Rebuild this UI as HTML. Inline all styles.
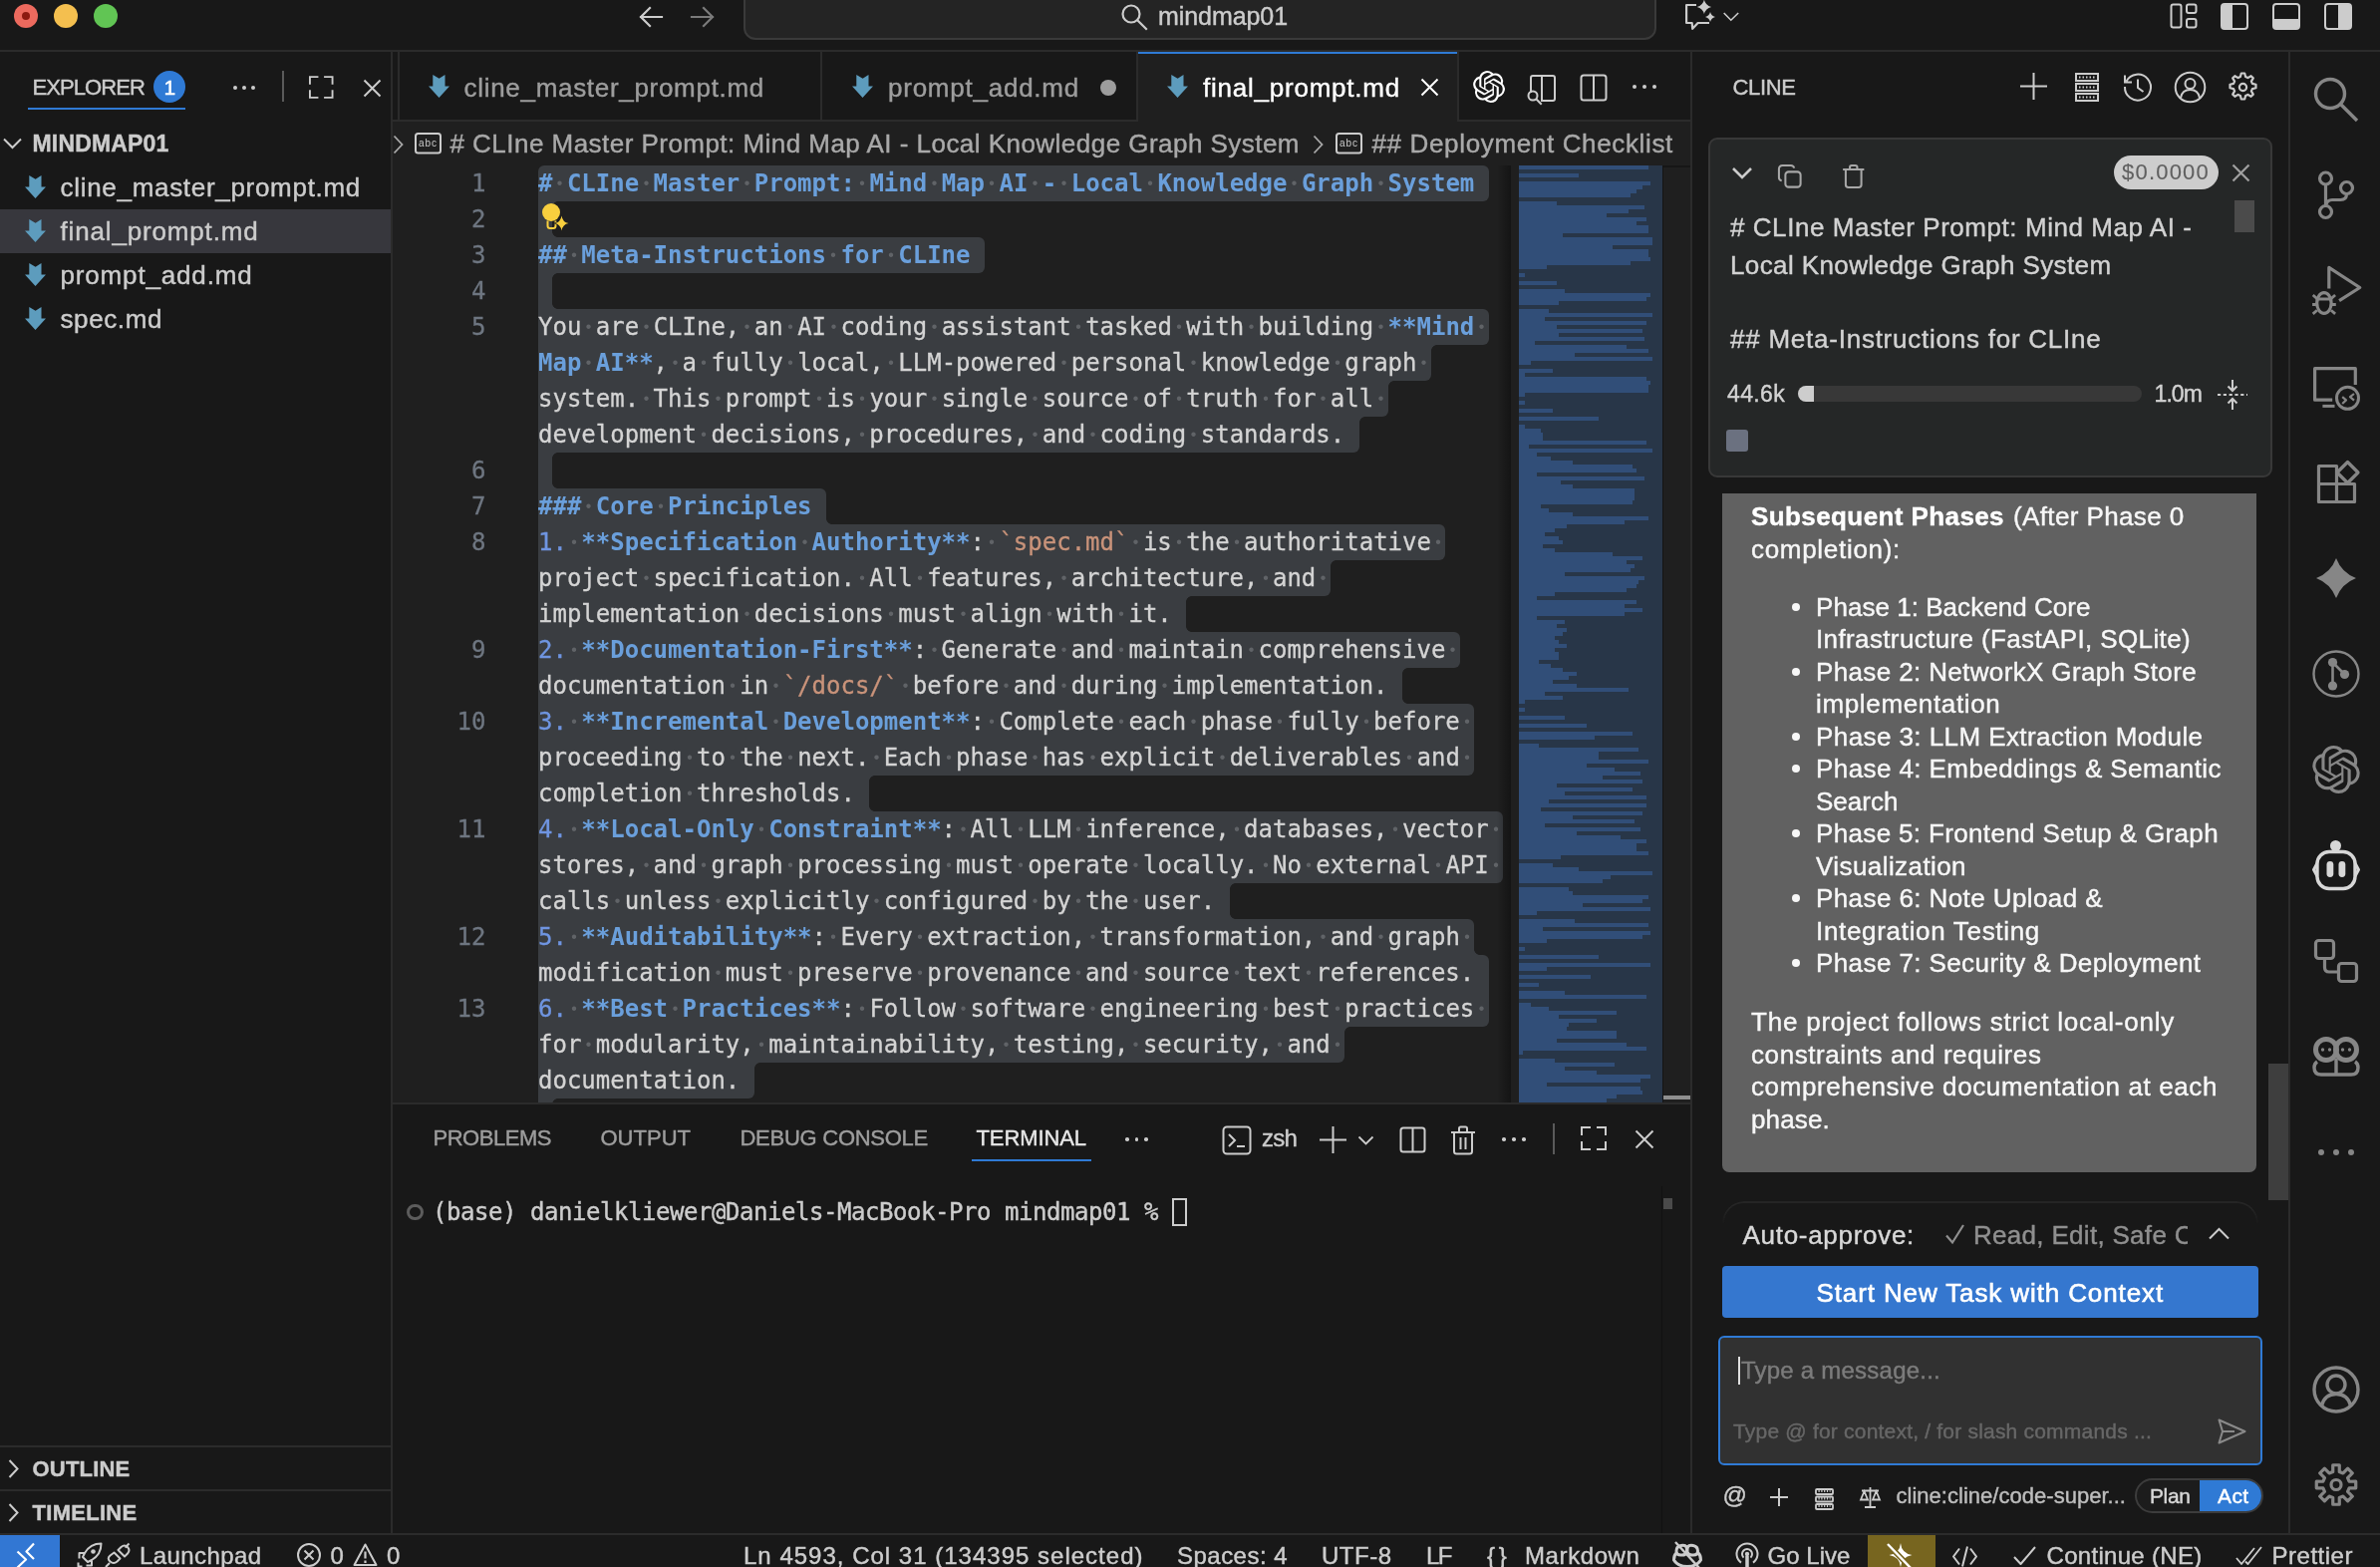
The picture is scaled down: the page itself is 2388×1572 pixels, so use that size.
<!DOCTYPE html>
<html lang="en">
<head>
<meta charset="utf-8">
<title>final_prompt.md — mindmap01</title>
<style>
*{box-sizing:border-box;margin:0;padding:0}
html,body{width:2388px;height:1572px;overflow:hidden;background:#181818}
body{position:relative;font-family:"Liberation Sans",sans-serif;color:#cccccc;font-size:26px;-webkit-font-smoothing:antialiased}
.abs{position:absolute}
.t{position:absolute;white-space:nowrap;line-height:1;-webkit-text-stroke:0.42px}
svg{position:absolute;overflow:visible}
.ic{stroke:#cccccc;fill:none;stroke-width:2.2;stroke-linecap:square;stroke-linejoin:miter}
/* regions */
#titlebar{left:0;top:0;width:2388px;height:50px;background:#181818}
#titleborder{left:0;top:50px;width:2388px;height:2px;background:#2b2b2b}
#sidebar{left:0;top:52px;width:392px;height:1486px;background:#181818}
#sideborder{left:392px;top:52px;width:2px;height:1486px;background:#2b2b2b}
#tabs{left:394px;top:52px;width:1302px;height:68px;background:#181818}
#tabsborder{left:394px;top:120px;width:1302px;height:2px;background:#2b2b2b}
#crumbs{left:394px;top:122px;width:1302px;height:44px;background:#1f1f1f}
#editor{left:394px;top:166px;width:1302px;height:940px;background:#1f1f1f;overflow:hidden}
#panel{left:394px;top:1106px;width:1302px;height:432px;background:#181818}
#panelborder{left:394px;top:1106px;width:1302px;height:2px;background:#2b2b2b}
#clineborder{left:1696px;top:52px;width:2px;height:1486px;background:#2b2b2b}
#cline{left:1698px;top:52px;width:598px;height:1486px;background:#181818}
#actborder{left:2296px;top:52px;width:2px;height:1486px;background:#2b2b2b}
#activity{left:2298px;top:52px;width:90px;height:1486px;background:#181818}
#statusborder{left:0;top:1538px;width:2388px;height:2px;background:#2b2b2b}
#status{left:0;top:1540px;width:2388px;height:32px;background:#181818}

.ed{position:absolute;left:0;top:0px;font-family:"DejaVu Sans Mono","Liberation Mono",monospace;font-size:24px;letter-spacing:0;line-height:36px;white-space:pre;color:#d4d4d4;-webkit-text-stroke:0.3px}
.ln{position:absolute;left:394px;width:93.5px;text-align:right;height:36px;color:#6e7681;letter-spacing:0}
.cr{position:absolute;left:540px;height:36px}
.sel{position:absolute;left:540px;height:36px;background:#3a3d41}
.h,.b{font-weight:700;color:#6a9fdb;-webkit-text-stroke:0}
.l{color:#6f95e1}.c{color:#c9937a}
.ws{background:radial-gradient(circle at 50% 49%,#606367 1.700px,rgba(96,99,103,0) 2.600px)}

</style>
</head>
<body><div id="root" style="position:absolute;left:0;top:0;width:2388px;height:1572px;will-change:transform">
<div id="titlebar" class="abs"></div>
<div id="titleborder" class="abs"></div>
<div id="sidebar" class="abs"></div>
<div id="sideborder" class="abs"></div>
<div id="tabs" class="abs"></div>
<div id="tabsborder" class="abs"></div>
<div id="crumbs" class="abs"></div>
<div id="editor" class="abs"></div>
<div id="panel" class="abs"></div>
<div id="panelborder" class="abs"></div>
<div id="clineborder" class="abs"></div>
<div id="cline" class="abs"></div>
<div id="actborder" class="abs"></div>
<div id="activity" class="abs"></div>
<div id="statusborder" class="abs"></div>
<div id="status" class="abs"></div>
<div class="abs" style="left:14px;top:4px;width:24px;height:24px;border-radius:50%;background:#ec6a5e"></div>
<div class="abs" style="left:22px;top:12px;width:8px;height:8px;border-radius:50%;background:#8c1a10"></div>
<div class="abs" style="left:54px;top:4px;width:24px;height:24px;border-radius:50%;background:#f4bf4f"></div>
<div class="abs" style="left:94px;top:4px;width:24px;height:24px;border-radius:50%;background:#61c554"></div>
<svg style="left:641px;top:5px;" width="24" height="24" viewBox="0 0 24 24"><path class="ic" style="stroke:#cccccc" d="M23 12H2M11 3L2 12l9 9"/></svg>
<svg style="left:693px;top:5px;" width="24" height="24" viewBox="0 0 24 24"><path class="ic" style="stroke:#7a7a7a" d="M1 12h21M13 3l9 9-9 9"/></svg>
<div class="abs" style="left:746px;top:-20px;width:916px;height:60px;border-radius:12px;background:#242424;border:2px solid #3a3a3a"></div>
<svg style="left:1124px;top:3px;" width="28" height="28" viewBox="0 0 28 28"><circle class="ic" cx="11" cy="11" r="8.5"/><path class="ic" d="M17.5 17.5L26 26"/></svg>
<div class="t" style="left:1162.0px;top:4.0px;font-size:25px;color:#cccccc;letter-spacing:-0.069px;">mindmap01</div>
<svg style="left:1690px;top:0px;" width="32" height="32" viewBox="0 0 32 32"><path class="ic" style="stroke-width:2.200;stroke-linecap:butt;stroke-linejoin:round" d="M12 5H2.100V23H7.700L8.200 28.800 13.600 23H25"/><path fill="#cccccc" d="M19.9 -0.3Q21.3 5.5 27.1 6.9 21.3 8.3 19.9 14.1 18.5 8.3 12.7 6.9 18.5 5.5 19.9 -0.3zM26.0 12.0Q27.0 16.0 31.0 17.0 27.0 18.0 26.0 22.0 25.0 18.0 21.0 17.0 25.0 16.0 26.0 12.0z"/></svg>
<svg style="left:1729px;top:12px;" width="16" height="10" viewBox="0 0 16 10"><path class="ic" style="stroke-width:1.600;stroke-linecap:butt" d="M0.700 1l7.100 7.200 7.400-7.200"/></svg>
<svg style="left:2177px;top:3px;" width="28" height="27" viewBox="0 0 28 27"><rect class="ic" style="stroke-width:2" x="1.500" y="1.500" width="10" height="23" rx="2"/><rect class="ic" style="stroke-width:2" x="17" y="1.500" width="9.500" height="8.500" rx="2"/><rect class="ic" style="stroke-width:2" x="17" y="16" width="9.500" height="8.500" rx="2"/></svg>
<svg style="left:2228px;top:3px;" width="28" height="27" viewBox="0 0 28 27"><rect class="ic" style="stroke-width:2" x="1" y="1" width="26" height="25" rx="3"/><path fill="#cccccc" d="M1 3q0-2 2-2h9v25H3q-2 0-2-2z"/></svg>
<svg style="left:2280px;top:3px;" width="28" height="27" viewBox="0 0 28 27"><rect class="ic" style="stroke-width:2" x="1" y="1" width="26" height="25" rx="3"/><path fill="#cccccc" d="M1 16h26v8q0 2-2 2H3q-2 0-2-2z"/></svg>
<svg style="left:2332px;top:3px;" width="28" height="27" viewBox="0 0 28 27"><rect class="ic" style="stroke-width:2" x="1" y="1" width="26" height="25" rx="3"/><path fill="#cccccc" d="M14 1h11q2 0 2 2v21q0 2-2 2H14z"/></svg>
<div class="t" style="left:32.5px;top:76.9px;font-size:22px;color:#cccccc;letter-spacing:-0.916px;">EXPLORER</div>
<div class="abs" style="left:28px;top:108px;width:158px;height:2px;background:#2f7ad5;"></div>
<div class="abs" style="left:154px;top:71px;width:32px;height:32px;border-radius:50%;background:#2f7ad5"></div>
<div class="t" style="left:164.5px;top:76.7px;font-size:21px;color:#ffffff;">1</div>
<div class="abs" style="left:233.5px;top:85.500px;width:4px;height:4px;border-radius:50%;background:#cccccc"></div>
<div class="abs" style="left:242.5px;top:85.500px;width:4px;height:4px;border-radius:50%;background:#cccccc"></div>
<div class="abs" style="left:251.5px;top:85.500px;width:4px;height:4px;border-radius:50%;background:#cccccc"></div>
<div class="abs" style="left:282.5px;top:71px;width:2px;height:31px;background:#5a5a5a;"></div>
<svg style="left:310px;top:75.5px;" width="24.5" height="23" viewBox="0 0 26 24"><path class="ic" style="stroke-width:2" d="M1 8V1h8M17 1h8v7M25 16v7h-8M9 23H1v-7"/></svg>
<svg style="left:365px;top:79.5px;" width="17" height="17" viewBox="0 0 17 17"><path class="ic" style="stroke-width:2;stroke-linecap:butt" d="M0.500 0.500l16 16M16.500 0.500l-16 16"/></svg>
<svg style="left:3px;top:138px;" width="19" height="12" viewBox="0 0 19 12"><path class="ic" style="stroke-width:2;stroke-linecap:butt" d="M1 1.500l8.500 8.500 8.500-8.500"/></svg>
<div class="t" style="left:32.5px;top:132.9px;font-size:23px;color:#cccccc;font-weight:700;letter-spacing:0.171px;">MINDMAP01</div>
<div class="abs" style="left:0px;top:210px;width:392px;height:44px;background:#37373d;"></div>
<svg style="left:25px;top:176px;" width="21" height="23" viewBox="0 0 21 23"><polygon fill="#5d9cbd" points="4.3,0 10.6,3.8 16.5,0 16.5,11.4 21,11.4 10.5,23 0,11.4 4.3,11.4"/></svg>
<div class="t" style="left:60.5px;top:175.2px;font-size:26px;color:#cccccc;letter-spacing:0.699px;">cline_master_prompt.md</div>
<svg style="left:25px;top:220px;" width="21" height="23" viewBox="0 0 21 23"><polygon fill="#5d9cbd" points="4.3,0 10.6,3.8 16.5,0 16.5,11.4 21,11.4 10.5,23 0,11.4 4.3,11.4"/></svg>
<div class="t" style="left:60.5px;top:219.2px;font-size:26px;color:#cccccc;letter-spacing:0.838px;">final_prompt.md</div>
<svg style="left:25px;top:264px;" width="21" height="23" viewBox="0 0 21 23"><polygon fill="#5d9cbd" points="4.3,0 10.6,3.8 16.5,0 16.5,11.4 21,11.4 10.5,23 0,11.4 4.3,11.4"/></svg>
<div class="t" style="left:60.5px;top:263.2px;font-size:26px;color:#cccccc;letter-spacing:0.837px;">prompt_add.md</div>
<svg style="left:25px;top:308px;" width="21" height="23" viewBox="0 0 21 23"><polygon fill="#5d9cbd" points="4.3,0 10.6,3.8 16.5,0 16.5,11.4 21,11.4 10.5,23 0,11.4 4.3,11.4"/></svg>
<div class="t" style="left:60.5px;top:307.2px;font-size:26px;color:#cccccc;letter-spacing:0.605px;">spec.md</div>
<div class="abs" style="left:0px;top:1450px;width:392px;height:2px;background:#2b2b2b;"></div>
<div class="abs" style="left:0px;top:1494px;width:392px;height:2px;background:#2b2b2b;"></div>
<svg style="left:8px;top:1463.5px;" width="11" height="19" viewBox="0 0 11 19"><path class="ic" style="stroke-width:2;stroke-linecap:butt" d="M1.500 1l8 8.500-8 8.500"/></svg>
<div class="t" style="left:32.5px;top:1462.9px;font-size:22px;color:#cccccc;font-weight:700;letter-spacing:0.207px;">OUTLINE</div>
<svg style="left:8px;top:1507.5px;" width="11" height="19" viewBox="0 0 11 19"><path class="ic" style="stroke-width:2;stroke-linecap:butt" d="M1.500 1l8 8.500-8 8.500"/></svg>
<div class="t" style="left:32.5px;top:1506.9px;font-size:22px;color:#cccccc;font-weight:700;letter-spacing:0.292px;">TIMELINE</div>
<div class="abs" style="left:399px;top:52px;width:2px;height:68px;background:#2b2b2b;"></div>
<svg style="left:430px;top:75px;" width="21" height="23" viewBox="0 0 21 23"><polygon fill="#5d9cbd" points="4.3,0 10.6,3.8 16.5,0 16.5,11.4 21,11.4 10.5,23 0,11.4 4.3,11.4"/></svg>
<div class="t" style="left:465.5px;top:74.8px;font-size:26px;color:#9d9d9d;letter-spacing:0.699px;">cline_master_prompt.md</div>
<div class="abs" style="left:823px;top:52px;width:2px;height:68px;background:#2b2b2b;"></div>
<svg style="left:855px;top:75px;" width="21" height="23" viewBox="0 0 21 23"><polygon fill="#5d9cbd" points="4.3,0 10.6,3.8 16.5,0 16.5,11.4 21,11.4 10.5,23 0,11.4 4.3,11.4"/></svg>
<div class="t" style="left:891.0px;top:74.8px;font-size:26px;color:#9d9d9d;letter-spacing:0.761px;">prompt_add.md</div>
<div class="abs" style="left:1104px;top:79.500px;width:16px;height:16px;border-radius:50%;background:#9d9d9d"></div>
<div class="abs" style="left:1140px;top:52px;width:2px;height:68px;background:#2b2b2b;"></div>
<div class="abs" style="left:1142px;top:52px;width:320px;height:70px;background:#1f1f1f;"></div>
<div class="abs" style="left:1142px;top:52px;width:320px;height:2px;background:#2f7ad5;"></div>
<svg style="left:1171px;top:75px;" width="21" height="23" viewBox="0 0 21 23"><polygon fill="#5d9cbd" points="4.3,0 10.6,3.8 16.5,0 16.5,11.4 21,11.4 10.5,23 0,11.4 4.3,11.4"/></svg>
<div class="t" style="left:1207.0px;top:74.8px;font-size:26px;color:#ffffff;letter-spacing:0.771px;">final_prompt.md</div>
<svg style="left:1426px;top:79px;" width="17" height="17" viewBox="0 0 17 17"><path class="ic" style="stroke:#ffffff;stroke-width:2;stroke-linecap:butt" d="M0.500 0.500l16 16M16.500 0.500l-16 16"/></svg>
<div class="abs" style="left:1462px;top:52px;width:2px;height:68px;background:#2b2b2b;"></div>
<svg style="left:1478px;top:71px;" width="32" height="32" viewBox="0 0 24 24"><path fill="#ffffff" d="M22.2819 9.8211a5.9847 5.9847 0 0 0-.5157-4.9108 6.0462 6.0462 0 0 0-6.5098-2.9A6.0651 6.0651 0 0 0 4.9807 4.1818a5.9847 5.9847 0 0 0-3.9977 2.9 6.0462 6.0462 0 0 0 .7427 7.0966 5.98 5.98 0 0 0 .511 4.9107 6.051 6.051 0 0 0 6.5146 2.9001A5.9847 5.9847 0 0 0 13.2599 24a6.0557 6.0557 0 0 0 5.7718-4.2058 5.9894 5.9894 0 0 0 3.9977-2.9001 6.0557 6.0557 0 0 0-.7475-7.0729zm-9.022 12.6081a4.4755 4.4755 0 0 1-2.8764-1.0408l.1419-.0804 4.7783-2.7582a.7948.7948 0 0 0 .3927-.6813v-6.7369l2.02 1.1686a.071.071 0 0 1 .038.052v5.5826a4.504 4.504 0 0 1-4.4945 4.4944zm-9.6607-4.1254a4.4708 4.4708 0 0 1-.5346-3.0137l.142.0852 4.783 2.7582a.7712.7712 0 0 0 .7806 0l5.8428-3.3685v2.3324a.0804.0804 0 0 1-.0332.0615L9.74 19.9502a4.4992 4.4992 0 0 1-6.1408-1.6464zM2.3408 7.8956a4.485 4.485 0 0 1 2.3655-1.9728V11.6a.7664.7664 0 0 0 .3879.6765l5.8144 3.3543-2.0201 1.1685a.0757.0757 0 0 1-.071 0l-4.8303-2.7865A4.504 4.504 0 0 1 2.3408 7.872zm16.5963 3.8558L13.1038 8.364 15.1192 7.2a.0757.0757 0 0 1 .071 0l4.8303 2.7913a4.4944 4.4944 0 0 1-.6765 8.1042v-5.6772a.79.79 0 0 0-.407-.667zm2.0107-3.0231l-.142-.0852-4.7735-2.7818a.7759.7759 0 0 0-.7854 0L9.409 9.2297V6.8974a.0662.0662 0 0 1 .0284-.0615l4.8303-2.7866a4.4992 4.4992 0 0 1 6.6802 4.66zM8.3065 12.863l-2.02-1.1638a.0804.0804 0 0 1-.038-.0567V6.0742a4.4992 4.4992 0 0 1 7.3757-3.4537l-.142.0805L8.704 5.459a.7948.7948 0 0 0-.3927.6813zm1.0976-2.3654l2.602-1.4998 2.6069 1.4998v2.9994l-2.5974 1.4997-2.6067-1.4997Z"/></svg>
<svg style="left:1531px;top:74px;" width="30" height="30" viewBox="0 0 30 30"><path class="ic" style="stroke-width:2" d="M5 18V4q0-2 2-2h20q2 0 2 2v21q0 2-2 2H17M16 2v25"/><circle class="ic" style="stroke-width:2" cx="7" cy="22" r="4.500"/><path class="ic" style="stroke-width:2" d="M10.500 25.500L15 30"/></svg>
<svg style="left:1585px;top:74px;" width="28" height="28" viewBox="0 0 28 28"><rect class="ic" style="stroke-width:2" x="1.500" y="1.500" width="25" height="25" rx="2.500"/><path class="ic" style="stroke-width:2" d="M14 2v24"/></svg>
<div class="abs" style="left:1638px;top:85px;width:4px;height:4px;border-radius:50%;background:#cccccc"></div>
<div class="abs" style="left:1648px;top:85px;width:4px;height:4px;border-radius:50%;background:#cccccc"></div>
<div class="abs" style="left:1658px;top:85px;width:4px;height:4px;border-radius:50%;background:#cccccc"></div>
<svg style="left:395px;top:136px;" width="9" height="18" viewBox="0 0 9 18"><path class="ic" style="stroke:#a9a9a9;stroke-width:1.800;stroke-linecap:butt" d="M0.500 0.500l8 8.500-8 8.500"/></svg>
<svg style="left:416px;top:133px;" width="27" height="21.5" viewBox="0 0 27 21.5"><rect class="ic" style="stroke-width:2;stroke:#cccccc" x="1" y="1" width="25" height="19.500" rx="2.500"/><text x="13.5" y="13.700" text-anchor="middle" font-family="Liberation Sans" font-size="10" font-weight="400" fill="#cccccc" letter-spacing="0.9">abc</text></svg>
<div class="t" style="left:451.5px;top:130.9px;font-size:26px;color:#a9a9a9;letter-spacing:0.465px;"># CLIne Master Prompt: Mind Map AI - Local Knowledge Graph System</div>
<svg style="left:1318px;top:136px;" width="9" height="18" viewBox="0 0 9 18"><path class="ic" style="stroke:#a9a9a9;stroke-width:1.800;stroke-linecap:butt" d="M0.500 0.500l8 8.500-8 8.500"/></svg>
<svg style="left:1340px;top:133px;" width="27" height="21.5" viewBox="0 0 27 21.5"><rect class="ic" style="stroke-width:2;stroke:#cccccc" x="1" y="1" width="25" height="19.500" rx="2.500"/><text x="13.5" y="13.700" text-anchor="middle" font-family="Liberation Sans" font-size="10" font-weight="400" fill="#cccccc" letter-spacing="0.9">abc</text></svg>
<div class="t" style="left:1376.5px;top:130.9px;font-size:26px;color:#a9a9a9;letter-spacing:0.648px;">## Deployment Checklist</div>
<div class="abs" style="left:0;top:0;width:1696px;height:1106px;overflow:hidden">
<div class="ed">
<div class="sel" style="top:166px;width:954.0px;border-radius:6px 6px 6px 0"></div>
<div class="sel" style="top:202px;width:14.0px;border-radius:0px 0px 0px 0"></div>
<div class="sel" style="top:238px;width:448.0px;border-radius:0px 6px 6px 0"></div>
<div class="sel" style="top:274px;width:14.0px;border-radius:0px 0px 0px 0"></div>
<div class="sel" style="top:310px;width:954.0px;border-radius:0px 6px 6px 0"></div>
<div class="sel" style="top:346px;width:896.0px;border-radius:0px 0px 6px 0"></div>
<div class="sel" style="top:382px;width:853.0px;border-radius:0px 0px 6px 0"></div>
<div class="sel" style="top:418px;width:824.0px;border-radius:0px 0px 6px 0"></div>
<div class="sel" style="top:454px;width:14.0px;border-radius:0px 0px 0px 0"></div>
<div class="sel" style="top:490px;width:289.0px;border-radius:0px 6px 0px 0"></div>
<div class="sel" style="top:526px;width:910.0px;border-radius:0px 6px 6px 0"></div>
<div class="sel" style="top:562px;width:795.0px;border-radius:0px 0px 6px 0"></div>
<div class="sel" style="top:598px;width:650.0px;border-radius:0px 0px 0px 0"></div>
<div class="sel" style="top:634px;width:925.0px;border-radius:0px 6px 6px 0"></div>
<div class="sel" style="top:670px;width:867.0px;border-radius:0px 0px 0px 0"></div>
<div class="sel" style="top:706px;width:939.0px;border-radius:0px 6px 0px 0"></div>
<div class="sel" style="top:742px;width:939.0px;border-radius:0px 0px 6px 0"></div>
<div class="sel" style="top:778px;width:332.0px;border-radius:0px 0px 0px 0"></div>
<div class="sel" style="top:814px;width:968.0px;border-radius:0px 6px 0px 0"></div>
<div class="sel" style="top:850px;width:968.0px;border-radius:0px 0px 6px 0"></div>
<div class="sel" style="top:886px;width:694.0px;border-radius:0px 0px 0px 0"></div>
<div class="sel" style="top:922px;width:939.0px;border-radius:0px 6px 0px 0"></div>
<div class="sel" style="top:958px;width:954.0px;border-radius:0px 6px 0px 0"></div>
<div class="sel" style="top:994px;width:954.0px;border-radius:0px 0px 6px 0"></div>
<div class="sel" style="top:1030px;width:809.0px;border-radius:0px 0px 6px 0"></div>
<div class="sel" style="top:1066px;width:217.0px;border-radius:0px 0px 6px 0"></div>
<div class="sel" style="top:1102px;width:14.0px;border-radius:0px 0px 0px 0"></div>
<div class="abs" style="left:554.0px;top:202px;width:6px;height:6px;background:radial-gradient(circle at 100% 100%,rgba(58,61,65,0) 5.600px,#3a3d41 6.300px)"></div>
<div class="abs" style="left:554.0px;top:232px;width:6px;height:6px;background:radial-gradient(circle at 100% 0%,rgba(58,61,65,0) 5.600px,#3a3d41 6.300px)"></div>
<div class="abs" style="left:554.0px;top:274px;width:6px;height:6px;background:radial-gradient(circle at 100% 100%,rgba(58,61,65,0) 5.600px,#3a3d41 6.300px)"></div>
<div class="abs" style="left:554.0px;top:304px;width:6px;height:6px;background:radial-gradient(circle at 100% 0%,rgba(58,61,65,0) 5.600px,#3a3d41 6.300px)"></div>
<div class="abs" style="left:1436.0px;top:346px;width:6px;height:6px;background:radial-gradient(circle at 100% 100%,rgba(58,61,65,0) 5.600px,#3a3d41 6.300px)"></div>
<div class="abs" style="left:1393.0px;top:382px;width:6px;height:6px;background:radial-gradient(circle at 100% 100%,rgba(58,61,65,0) 5.600px,#3a3d41 6.300px)"></div>
<div class="abs" style="left:1364.0px;top:418px;width:6px;height:6px;background:radial-gradient(circle at 100% 100%,rgba(58,61,65,0) 5.600px,#3a3d41 6.300px)"></div>
<div class="abs" style="left:554.0px;top:454px;width:6px;height:6px;background:radial-gradient(circle at 100% 100%,rgba(58,61,65,0) 5.600px,#3a3d41 6.300px)"></div>
<div class="abs" style="left:554.0px;top:484px;width:6px;height:6px;background:radial-gradient(circle at 100% 0%,rgba(58,61,65,0) 5.600px,#3a3d41 6.300px)"></div>
<div class="abs" style="left:829.0px;top:520px;width:6px;height:6px;background:radial-gradient(circle at 100% 0%,rgba(58,61,65,0) 5.600px,#3a3d41 6.300px)"></div>
<div class="abs" style="left:1335.0px;top:562px;width:6px;height:6px;background:radial-gradient(circle at 100% 100%,rgba(58,61,65,0) 5.600px,#3a3d41 6.300px)"></div>
<div class="abs" style="left:1190.0px;top:598px;width:6px;height:6px;background:radial-gradient(circle at 100% 100%,rgba(58,61,65,0) 5.600px,#3a3d41 6.300px)"></div>
<div class="abs" style="left:1190.0px;top:628px;width:6px;height:6px;background:radial-gradient(circle at 100% 0%,rgba(58,61,65,0) 5.600px,#3a3d41 6.300px)"></div>
<div class="abs" style="left:1407.0px;top:670px;width:6px;height:6px;background:radial-gradient(circle at 100% 100%,rgba(58,61,65,0) 5.600px,#3a3d41 6.300px)"></div>
<div class="abs" style="left:1407.0px;top:700px;width:6px;height:6px;background:radial-gradient(circle at 100% 0%,rgba(58,61,65,0) 5.600px,#3a3d41 6.300px)"></div>
<div class="abs" style="left:872.0px;top:778px;width:6px;height:6px;background:radial-gradient(circle at 100% 100%,rgba(58,61,65,0) 5.600px,#3a3d41 6.300px)"></div>
<div class="abs" style="left:872.0px;top:808px;width:6px;height:6px;background:radial-gradient(circle at 100% 0%,rgba(58,61,65,0) 5.600px,#3a3d41 6.300px)"></div>
<div class="abs" style="left:1234.0px;top:886px;width:6px;height:6px;background:radial-gradient(circle at 100% 100%,rgba(58,61,65,0) 5.600px,#3a3d41 6.300px)"></div>
<div class="abs" style="left:1234.0px;top:916px;width:6px;height:6px;background:radial-gradient(circle at 100% 0%,rgba(58,61,65,0) 5.600px,#3a3d41 6.300px)"></div>
<div class="abs" style="left:1479.0px;top:952px;width:6px;height:6px;background:radial-gradient(circle at 100% 0%,rgba(58,61,65,0) 5.600px,#3a3d41 6.300px)"></div>
<div class="abs" style="left:1349.0px;top:1030px;width:6px;height:6px;background:radial-gradient(circle at 100% 100%,rgba(58,61,65,0) 5.600px,#3a3d41 6.300px)"></div>
<div class="abs" style="left:757.0px;top:1066px;width:6px;height:6px;background:radial-gradient(circle at 100% 100%,rgba(58,61,65,0) 5.600px,#3a3d41 6.300px)"></div>
<div class="abs" style="left:554.0px;top:1102px;width:6px;height:6px;background:radial-gradient(circle at 100% 100%,rgba(58,61,65,0) 5.600px,#3a3d41 6.300px)"></div>
<div class="ln" style="top:166px">1</div>
<div class="cr" style="top:166px"><span class="h">#<span class="ws"> </span>CLIne<span class="ws"> </span>Master<span class="ws"> </span>Prompt:<span class="ws"> </span>Mind<span class="ws"> </span>Map<span class="ws"> </span>AI<span class="ws"> </span>-<span class="ws"> </span>Local<span class="ws"> </span>Knowledge<span class="ws"> </span>Graph<span class="ws"> </span>System</span></div>
<div class="ln" style="top:202px">2</div>
<div class="ln" style="top:238px">3</div>
<div class="cr" style="top:238px"><span class="h">##<span class="ws"> </span>Meta-Instructions<span class="ws"> </span>for<span class="ws"> </span>CLIne</span></div>
<div class="ln" style="top:274px">4</div>
<div class="ln" style="top:310px">5</div>
<div class="cr" style="top:310px">You<span class="ws"> </span>are<span class="ws"> </span>CLIne,<span class="ws"> </span>an<span class="ws"> </span>AI<span class="ws"> </span>coding<span class="ws"> </span>assistant<span class="ws"> </span>tasked<span class="ws"> </span>with<span class="ws"> </span>building<span class="ws"> </span><span class="b">**Mind<span class="ws"> </span></span></div>
<div class="cr" style="top:346px"><span class="b">Map<span class="ws"> </span>AI**</span>,<span class="ws"> </span>a<span class="ws"> </span>fully<span class="ws"> </span>local,<span class="ws"> </span>LLM-powered<span class="ws"> </span>personal<span class="ws"> </span>knowledge<span class="ws"> </span>graph<span class="ws"> </span></div>
<div class="cr" style="top:382px">system.<span class="ws"> </span>This<span class="ws"> </span>prompt<span class="ws"> </span>is<span class="ws"> </span>your<span class="ws"> </span>single<span class="ws"> </span>source<span class="ws"> </span>of<span class="ws"> </span>truth<span class="ws"> </span>for<span class="ws"> </span>all<span class="ws"> </span></div>
<div class="cr" style="top:418px">development<span class="ws"> </span>decisions,<span class="ws"> </span>procedures,<span class="ws"> </span>and<span class="ws"> </span>coding<span class="ws"> </span>standards.</div>
<div class="ln" style="top:454px">6</div>
<div class="ln" style="top:490px">7</div>
<div class="cr" style="top:490px"><span class="h">###<span class="ws"> </span>Core<span class="ws"> </span>Principles</span></div>
<div class="ln" style="top:526px">8</div>
<div class="cr" style="top:526px"><span class="l">1.</span><span class="ws"> </span><span class="b">**Specification<span class="ws"> </span>Authority**</span>:<span class="ws"> </span><span class="c">`spec.md`</span><span class="ws"> </span>is<span class="ws"> </span>the<span class="ws"> </span>authoritative<span class="ws"> </span></div>
<div class="cr" style="top:562px">project<span class="ws"> </span>specification.<span class="ws"> </span>All<span class="ws"> </span>features,<span class="ws"> </span>architecture,<span class="ws"> </span>and<span class="ws"> </span></div>
<div class="cr" style="top:598px">implementation<span class="ws"> </span>decisions<span class="ws"> </span>must<span class="ws"> </span>align<span class="ws"> </span>with<span class="ws"> </span>it.</div>
<div class="ln" style="top:634px">9</div>
<div class="cr" style="top:634px"><span class="l">2.</span><span class="ws"> </span><span class="b">**Documentation-First**</span>:<span class="ws"> </span>Generate<span class="ws"> </span>and<span class="ws"> </span>maintain<span class="ws"> </span>comprehensive<span class="ws"> </span></div>
<div class="cr" style="top:670px">documentation<span class="ws"> </span>in<span class="ws"> </span><span class="c">`/docs/`</span><span class="ws"> </span>before<span class="ws"> </span>and<span class="ws"> </span>during<span class="ws"> </span>implementation.</div>
<div class="ln" style="top:706px">10</div>
<div class="cr" style="top:706px"><span class="l">3.</span><span class="ws"> </span><span class="b">**Incremental<span class="ws"> </span>Development**</span>:<span class="ws"> </span>Complete<span class="ws"> </span>each<span class="ws"> </span>phase<span class="ws"> </span>fully<span class="ws"> </span>before<span class="ws"> </span></div>
<div class="cr" style="top:742px">proceeding<span class="ws"> </span>to<span class="ws"> </span>the<span class="ws"> </span>next.<span class="ws"> </span>Each<span class="ws"> </span>phase<span class="ws"> </span>has<span class="ws"> </span>explicit<span class="ws"> </span>deliverables<span class="ws"> </span>and<span class="ws"> </span></div>
<div class="cr" style="top:778px">completion<span class="ws"> </span>thresholds.</div>
<div class="ln" style="top:814px">11</div>
<div class="cr" style="top:814px"><span class="l">4.</span><span class="ws"> </span><span class="b">**Local-Only<span class="ws"> </span>Constraint**</span>:<span class="ws"> </span>All<span class="ws"> </span>LLM<span class="ws"> </span>inference,<span class="ws"> </span>databases,<span class="ws"> </span>vector<span class="ws"> </span></div>
<div class="cr" style="top:850px">stores,<span class="ws"> </span>and<span class="ws"> </span>graph<span class="ws"> </span>processing<span class="ws"> </span>must<span class="ws"> </span>operate<span class="ws"> </span>locally.<span class="ws"> </span>No<span class="ws"> </span>external<span class="ws"> </span>API<span class="ws"> </span></div>
<div class="cr" style="top:886px">calls<span class="ws"> </span>unless<span class="ws"> </span>explicitly<span class="ws"> </span>configured<span class="ws"> </span>by<span class="ws"> </span>the<span class="ws"> </span>user.</div>
<div class="ln" style="top:922px">12</div>
<div class="cr" style="top:922px"><span class="l">5.</span><span class="ws"> </span><span class="b">**Auditability**</span>:<span class="ws"> </span>Every<span class="ws"> </span>extraction,<span class="ws"> </span>transformation,<span class="ws"> </span>and<span class="ws"> </span>graph<span class="ws"> </span></div>
<div class="cr" style="top:958px">modification<span class="ws"> </span>must<span class="ws"> </span>preserve<span class="ws"> </span>provenance<span class="ws"> </span>and<span class="ws"> </span>source<span class="ws"> </span>text<span class="ws"> </span>references.</div>
<div class="ln" style="top:994px">13</div>
<div class="cr" style="top:994px"><span class="l">6.</span><span class="ws"> </span><span class="b">**Best<span class="ws"> </span>Practices**</span>:<span class="ws"> </span>Follow<span class="ws"> </span>software<span class="ws"> </span>engineering<span class="ws"> </span>best<span class="ws"> </span>practices<span class="ws"> </span></div>
<div class="cr" style="top:1030px">for<span class="ws"> </span>modularity,<span class="ws"> </span>maintainability,<span class="ws"> </span>testing,<span class="ws"> </span>security,<span class="ws"> </span>and<span class="ws"> </span></div>
<div class="cr" style="top:1066px">documentation.</div>
<div class="ln" style="top:1102px">14</div>
</div>
<svg style="left:543px;top:203px;" width="30" height="30" viewBox="0 0 30 30"><circle fill="#f8cf3e" cx="10" cy="10" r="9"/><path fill="none" stroke="#f8cf3e" stroke-width="2" d="M6.500 18.500v5q0 2.500 2.500 2.500h3q2.500 0 2.500-2.500v-5"/><path fill="#f8cf3e" stroke="#1f1f1f" stroke-width="1.600" paint-order="stroke" d="M20.500 13.500q1 6.500 7 7.500-6 1-7 7.500-1-6.500-7-7.500 6-1 7-7.500z"/></svg>
<div class="abs" style="left:1502px;top:166px;width:14px;height:940px;background:linear-gradient(90deg,rgba(0,0,0,0),rgba(0,0,0,0.35));"></div>
<div class="abs" style="left:1524px;top:166px;width:144px;height:940px;background:#283648;"></div>
<svg style="left:1524px;top:166px;overflow:hidden;" width="144" height="940" viewBox="0 0 144 940"><g fill="#314e78"><rect x="0" y="0" width="130" height="4"/><rect x="0" y="8" width="60" height="4"/><rect x="0" y="16" width="132" height="4"/><rect x="0" y="20" width="124" height="4"/><rect x="0" y="24" width="118" height="4"/><rect x="0" y="28" width="112" height="4"/><rect x="0" y="36" width="38" height="4"/><rect x="0" y="40" width="126" height="4"/><rect x="0" y="44" width="110" height="4"/><rect x="0" y="48" width="88" height="4"/><rect x="0" y="52" width="128" height="4"/><rect x="0" y="56" width="118" height="4"/><rect x="0" y="60" width="130" height="4"/><rect x="0" y="64" width="130" height="4"/><rect x="0" y="68" width="44" height="4"/><rect x="0" y="72" width="134" height="4"/><rect x="0" y="76" width="134" height="4"/><rect x="0" y="80" width="94" height="4"/><rect x="0" y="84" width="130" height="4"/><rect x="0" y="88" width="130" height="4"/><rect x="0" y="92" width="132" height="4"/><rect x="0" y="96" width="112" height="4"/><rect x="0" y="100" width="28" height="4"/><rect x="0" y="108" width="6" height="4"/><rect x="0" y="116" width="38" height="4"/><rect x="0" y="124" width="46" height="4"/><rect x="0" y="128" width="132" height="4"/><rect x="0" y="132" width="128" height="4"/><rect x="0" y="136" width="40" height="4"/><rect x="0" y="144" width="30" height="4"/><rect x="0" y="148" width="134" height="4"/><rect x="0" y="152" width="26" height="4"/><rect x="0" y="156" width="128" height="4"/><rect x="0" y="160" width="38" height="4"/><rect x="0" y="164" width="124" height="4"/><rect x="0" y="168" width="40" height="4"/><rect x="0" y="172" width="126" height="4"/><rect x="0" y="176" width="16" height="4"/><rect x="0" y="180" width="108" height="4"/><rect x="0" y="184" width="130" height="4"/><rect x="0" y="188" width="56" height="4"/><rect x="0" y="192" width="134" height="4"/><rect x="0" y="196" width="12" height="4"/><rect x="0" y="204" width="34" height="4"/><rect x="0" y="208" width="6" height="4"/><rect x="0" y="212" width="128" height="4"/><rect x="0" y="216" width="132" height="4"/><rect x="0" y="220" width="130" height="4"/><rect x="0" y="224" width="130" height="4"/><rect x="0" y="228" width="6" height="4"/><rect x="0" y="236" width="6" height="4"/><rect x="0" y="244" width="34" height="4"/><rect x="0" y="252" width="80" height="4"/><rect x="0" y="260" width="6" height="4"/><rect x="0" y="264" width="22" height="4"/><rect x="0" y="268" width="24" height="4"/><rect x="0" y="272" width="24" height="4"/><rect x="0" y="276" width="128" height="4"/><rect x="0" y="280" width="10" height="4"/><rect x="0" y="284" width="134" height="4"/><rect x="0" y="288" width="18" height="4"/><rect x="0" y="292" width="32" height="4"/><rect x="0" y="296" width="54" height="4"/><rect x="0" y="300" width="114" height="4"/><rect x="0" y="304" width="118" height="4"/><rect x="0" y="308" width="18" height="4"/><rect x="0" y="312" width="126" height="4"/><rect x="0" y="316" width="42" height="4"/><rect x="0" y="320" width="54" height="4"/><rect x="0" y="324" width="116" height="4"/><rect x="0" y="328" width="116" height="4"/><rect x="0" y="332" width="116" height="4"/><rect x="0" y="336" width="114" height="4"/><rect x="0" y="340" width="22" height="4"/><rect x="0" y="344" width="30" height="4"/><rect x="0" y="348" width="54" height="4"/><rect x="0" y="352" width="130" height="4"/><rect x="0" y="356" width="106" height="4"/><rect x="0" y="360" width="48" height="4"/><rect x="0" y="364" width="36" height="4"/><rect x="0" y="368" width="26" height="4"/><rect x="0" y="372" width="40" height="4"/><rect x="0" y="376" width="44" height="4"/><rect x="0" y="380" width="24" height="4"/><rect x="0" y="384" width="36" height="4"/><rect x="0" y="388" width="94" height="4"/><rect x="0" y="392" width="124" height="4"/><rect x="0" y="396" width="108" height="4"/><rect x="0" y="400" width="116" height="4"/><rect x="0" y="404" width="112" height="4"/><rect x="0" y="408" width="46" height="4"/><rect x="0" y="412" width="126" height="4"/><rect x="0" y="416" width="120" height="4"/><rect x="0" y="420" width="118" height="4"/><rect x="0" y="424" width="108" height="4"/><rect x="0" y="428" width="36" height="4"/><rect x="0" y="432" width="18" height="4"/><rect x="0" y="436" width="118" height="4"/><rect x="0" y="440" width="106" height="4"/><rect x="0" y="444" width="124" height="4"/><rect x="0" y="448" width="106" height="4"/><rect x="0" y="452" width="18" height="4"/><rect x="0" y="456" width="46" height="4"/><rect x="0" y="460" width="38" height="4"/><rect x="0" y="464" width="48" height="4"/><rect x="0" y="468" width="44" height="4"/><rect x="0" y="472" width="36" height="4"/><rect x="0" y="476" width="40" height="4"/><rect x="0" y="480" width="48" height="4"/><rect x="0" y="484" width="36" height="4"/><rect x="0" y="488" width="40" height="4"/><rect x="0" y="492" width="40" height="4"/><rect x="0" y="496" width="20" height="4"/><rect x="0" y="500" width="32" height="4"/><rect x="0" y="504" width="44" height="4"/><rect x="0" y="508" width="58" height="4"/><rect x="0" y="512" width="50" height="4"/><rect x="0" y="516" width="34" height="4"/><rect x="0" y="520" width="58" height="4"/><rect x="0" y="524" width="110" height="4"/><rect x="0" y="528" width="26" height="4"/><rect x="0" y="532" width="44" height="4"/><rect x="0" y="536" width="6" height="4"/><rect x="0" y="544" width="6" height="4"/><rect x="0" y="552" width="46" height="4"/><rect x="0" y="560" width="68" height="4"/><rect x="0" y="568" width="114" height="4"/><rect x="0" y="572" width="76" height="4"/><rect x="0" y="580" width="20" height="4"/><rect x="0" y="584" width="120" height="4"/><rect x="0" y="588" width="80" height="4"/><rect x="0" y="592" width="80" height="4"/><rect x="0" y="596" width="130" height="4"/><rect x="0" y="600" width="68" height="4"/><rect x="0" y="604" width="96" height="4"/><rect x="0" y="608" width="122" height="4"/><rect x="0" y="612" width="84" height="4"/><rect x="0" y="616" width="124" height="4"/><rect x="0" y="620" width="38" height="4"/><rect x="0" y="624" width="114" height="4"/><rect x="0" y="628" width="46" height="4"/><rect x="0" y="632" width="128" height="4"/><rect x="0" y="636" width="30" height="4"/><rect x="0" y="640" width="128" height="4"/><rect x="0" y="644" width="22" height="4"/><rect x="0" y="648" width="124" height="4"/><rect x="0" y="652" width="54" height="4"/><rect x="0" y="656" width="116" height="4"/><rect x="0" y="660" width="26" height="4"/><rect x="0" y="664" width="122" height="4"/><rect x="0" y="668" width="58" height="4"/><rect x="0" y="672" width="102" height="4"/><rect x="0" y="676" width="128" height="4"/><rect x="0" y="680" width="118" height="4"/><rect x="0" y="684" width="118" height="4"/><rect x="0" y="688" width="130" height="4"/><rect x="0" y="692" width="42" height="4"/><rect x="0" y="700" width="34" height="4"/><rect x="0" y="704" width="60" height="4"/><rect x="0" y="708" width="134" height="4"/><rect x="0" y="712" width="92" height="4"/><rect x="0" y="716" width="84" height="4"/><rect x="0" y="724" width="50" height="4"/><rect x="0" y="728" width="54" height="4"/><rect x="0" y="732" width="130" height="4"/><rect x="0" y="736" width="124" height="4"/><rect x="0" y="740" width="64" height="4"/><rect x="0" y="744" width="132" height="4"/><rect x="0" y="748" width="18" height="4"/><rect x="0" y="756" width="56" height="4"/><rect x="0" y="760" width="130" height="4"/><rect x="0" y="764" width="24" height="4"/><rect x="0" y="768" width="132" height="4"/><rect x="0" y="772" width="124" height="4"/><rect x="0" y="776" width="28" height="4"/><rect x="0" y="784" width="6" height="4"/><rect x="0" y="792" width="80" height="4"/><rect x="0" y="800" width="132" height="4"/><rect x="0" y="804" width="28" height="4"/><rect x="0" y="812" width="72" height="4"/><rect x="0" y="820" width="20" height="4"/><rect x="0" y="828" width="46" height="4"/><rect x="0" y="832" width="128" height="4"/><rect x="0" y="840" width="12" height="4"/><rect x="0" y="844" width="30" height="4"/><rect x="0" y="848" width="98" height="4"/><rect x="0" y="852" width="40" height="4"/><rect x="0" y="856" width="78" height="4"/><rect x="0" y="860" width="50" height="4"/><rect x="0" y="864" width="48" height="4"/><rect x="0" y="868" width="98" height="4"/><rect x="0" y="872" width="98" height="4"/><rect x="0" y="876" width="38" height="4"/><rect x="0" y="880" width="108" height="4"/><rect x="0" y="884" width="128" height="4"/><rect x="0" y="888" width="4" height="4"/><rect x="0" y="896" width="36" height="4"/><rect x="0" y="900" width="96" height="4"/><rect x="0" y="904" width="46" height="4"/><rect x="0" y="908" width="78" height="4"/><rect x="0" y="912" width="132" height="4"/><rect x="0" y="916" width="122" height="4"/><rect x="0" y="920" width="28" height="4"/><rect x="0" y="924" width="122" height="4"/><rect x="0" y="928" width="124" height="4"/><rect x="0" y="932" width="98" height="4"/><rect x="0" y="936" width="88" height="4"/></g></svg>
<div class="abs" style="left:1668px;top:166px;width:1px;height:940px;background:#141414;"></div>
<div class="abs" style="left:1669px;top:166px;width:27px;height:2px;background:#161616;"></div>
<div class="abs" style="left:1669px;top:1099px;width:27px;height:4px;background:#8f8f8f;"></div>
</div>
<div class="t" style="left:434.5px;top:1131.4px;font-size:22px;color:#9d9d9d;letter-spacing:-0.471px;">PROBLEMS</div>
<div class="t" style="left:602.5px;top:1131.4px;font-size:22px;color:#9d9d9d;letter-spacing:0.010px;">OUTPUT</div>
<div class="t" style="left:742.5px;top:1131.4px;font-size:22px;color:#9d9d9d;letter-spacing:-0.264px;">DEBUG CONSOLE</div>
<div class="t" style="left:979.5px;top:1131.4px;font-size:22px;color:#e7e7e7;letter-spacing:-0.092px;">TERMINAL</div>
<div class="abs" style="left:975px;top:1163px;width:120px;height:2px;background:#2f7ad5;"></div>
<div class="abs" style="left:1129.25px;top:1141px;width:3.500px;height:3.500px;border-radius:50%;background:#cccccc"></div>
<div class="abs" style="left:1138.75px;top:1141px;width:3.500px;height:3.500px;border-radius:50%;background:#cccccc"></div>
<div class="abs" style="left:1148.25px;top:1141px;width:3.500px;height:3.500px;border-radius:50%;background:#cccccc"></div>
<svg style="left:1226px;top:1129px;" width="30" height="30" viewBox="0 0 30 30"><rect class="ic" style="stroke-width:2" x="1.500" y="1.500" width="27" height="27" rx="3.500"/><path class="ic" style="stroke-width:2;stroke-linecap:butt" d="M7 9l6 6-6 6M15 21h8"/></svg>
<div class="t" style="left:1266.0px;top:1130.2px;font-size:24px;color:#cccccc;letter-spacing:-0.783px;">zsh</div>
<svg style="left:1324px;top:1130px;" width="27" height="27" viewBox="0 0 27 27"><path class="ic" style="stroke-width:2;stroke-linecap:butt" d="M13.500 0v27M0 13.500h27"/></svg>
<svg style="left:1363px;top:1140px;" width="15" height="9" viewBox="0 0 15 9"><path class="ic" style="stroke-width:1.800;stroke-linecap:butt" d="M0.500 0.500l7 7 7-7"/></svg>
<svg style="left:1404px;top:1130px;" width="27" height="27" viewBox="0 0 27 27"><rect class="ic" style="stroke-width:2" x="1.500" y="1.500" width="24" height="24" rx="2.500"/><path class="ic" style="stroke-width:2" d="M13.500 2v23"/></svg>
<svg style="left:1456px;top:1129px;" width="24" height="30" viewBox="0 0 24 30"><path class="ic" style="stroke-width:2;stroke-linecap:butt" d="M0 7h24M8 7V3q0-1.500 1.500-1.500h5q1.500 0 1.500 1.500v4M3 7v19q0 2.500 2.500 2.500h13q2.500 0 2.500-2.500V7M9.500 12v12M14.500 12v12"/></svg>
<div class="abs" style="left:1507.25px;top:1141px;width:3.500px;height:3.500px;border-radius:50%;background:#cccccc"></div>
<div class="abs" style="left:1517.25px;top:1141px;width:3.500px;height:3.500px;border-radius:50%;background:#cccccc"></div>
<div class="abs" style="left:1527.25px;top:1141px;width:3.500px;height:3.500px;border-radius:50%;background:#cccccc"></div>
<div class="abs" style="left:1557.5px;top:1127px;width:2px;height:31px;background:#5a5a5a;"></div>
<svg style="left:1586px;top:1130px;" width="25" height="24" viewBox="0 0 25 24"><path class="ic" style="stroke-width:2" d="M1 8V1h8M17 1h8v7M25 16v7h-8M9 23H1v-7"/></svg>
<svg style="left:1641px;top:1134px;" width="18" height="18" viewBox="0 0 18 18"><path class="ic" style="stroke-width:2;stroke-linecap:butt" d="M0.500 0.500l17 17M17.500 0.500l-17 17"/></svg>
<div class="abs" style="left:408px;top:1207.500px;width:16.500px;height:16.500px;border-radius:50%;border:3px solid #5c5c5c"></div>
<div class="t" style="left:434px;top:1198px;height:36px;line-height:36px;font-family:'DejaVu Sans Mono','Liberation Mono',monospace;font-size:24px;letter-spacing:-0.45px;color:#cccccc;white-space:pre">(base) danielkliewer@Daniels-MacBook-Pro mindmap01 % </div>
<div class="abs" style="left:1176px;top:1202px;width:14.500px;height:28px;border:2px solid #cccccc"></div>
<div class="abs" style="left:1669px;top:1202px;width:9px;height:11px;background:#4a4a4a;"></div>
<div class="t" style="left:1738.5px;top:76.9px;font-size:22px;color:#cccccc;letter-spacing:-0.359px;">CLINE</div>
<svg style="left:2027px;top:73px;" width="27" height="27" viewBox="0 0 27 27"><path class="ic" style="stroke-width:2;stroke-linecap:butt" d="M13.500 0v27M0 13.500h27"/></svg>
<svg style="left:2082px;top:72.5px;" width="24" height="29" viewBox="0 0 24 29"><g class="ic" style="stroke-width:2;stroke-linecap:butt"><rect x="1" y="1" width="22" height="7"/><rect x="1" y="11" width="22" height="7"/><rect x="1" y="21" width="22" height="7"/><path stroke-dasharray="1.500 2" d="M4 4.500h16M4 14.500h16M4 24.500h16"/></g></svg>
<svg style="left:2130px;top:72px;" width="30" height="30" viewBox="0 0 30 30"><path class="ic" style="stroke-width:2;stroke-linecap:butt" d="M3.500 9.500A13 13 0 1 1 2 15M2 3.500v7h7M15 7.500v8.500l5.500 4"/></svg>
<svg style="left:2182px;top:71.5px;" width="31" height="31" viewBox="0 0 31 31"><circle class="ic" style="stroke-width:2" cx="15.500" cy="15.500" r="14.800"/><circle class="ic" style="stroke-width:2" cx="15.500" cy="12" r="5"/><path class="ic" style="stroke-width:2;stroke-linecap:butt" d="M6 26q1.500-8 9.500-8t9.500 8"/></svg>
<svg style="left:2234.5px;top:71.5px;" width="31" height="31" viewBox="0 0 31 31"><g class="ic" style="stroke-width:2.200;stroke-linejoin:round"><path d="M15 1.500l2.200 0 .9 3.600 2.300 1 3.200-1.900 2.200 2.200-1.900 3.200 1 2.300 3.600.9 0 3.400-3.600.9-1 2.300 1.900 3.200-2.200 2.200-3.200-1.900-2.300 1-.9 3.600-3.400 0-.9-3.600-2.300-1-3.200 1.900-2.200-2.200 1.900-3.200-1-2.300-3.600-.9 0-3.400 3.600-.9 1-2.300-1.900-3.200 2.200-2.200 3.200 1.900 2.300-1 .9-3.600z"/><circle cx="15.500" cy="15.500" r="3.600"/></g></svg>
<div class="abs" style="left:1714px;top:138px;width:566px;height:341px;border:2px solid #383838;border-radius:9px;background:#252727"></div>
<svg style="left:1738px;top:168px;" width="20" height="11" viewBox="0 0 20 11"><path class="ic" style="stroke-width:2.600;stroke-linecap:butt" d="M1 1l9 9 9-9"/></svg>
<svg style="left:1784px;top:165px;" width="24" height="24" viewBox="0 0 26 26"><rect class="ic" style="stroke:#a8a8a8;stroke-width:2.200" x="8" y="8" width="16.500" height="16.500" rx="3.500"/><path class="ic" style="stroke:#a8a8a8;stroke-width:2.200;stroke-linecap:butt" d="M4 17.500q-3-.5-3-3.500V5q0-4 4-4h9q3 0 3.500 3"/></svg>
<svg style="left:1849px;top:165px;" width="21.5" height="24" viewBox="0 0 23 26"><path class="ic" style="stroke:#a8a8a8;stroke-width:2.200;stroke-linecap:butt" d="M0 5.500h23M7.500 5.500V3q0-2 2-2h4q2 0 2 2v2.500M3 5.500v16.500q0 3 3 3h11q3 0 3-3V5.500"/></svg>
<div class="abs" style="left:2120.500px;top:155.500px;width:105.500px;height:34px;border-radius:17px;background:#cdcdcd"></div>
<div class="t" style="left:2129.0px;top:161.9px;font-size:22px;color:#606060;letter-spacing:1.211px;-webkit-text-stroke:0.1px;">$0.0000</div>
<svg style="left:2240px;top:165px;" width="17" height="17" viewBox="0 0 17 17"><path class="ic" style="stroke:#a0a0a0;stroke-width:2.200;stroke-linecap:butt" d="M0.500 0.500l16 16M16.500 0.500l-16 16"/></svg>
<div class="abs" style="left:2242px;top:201px;width:20px;height:32px;background:#4b4b4b;"></div>
<div class="t" style="left:1736.0px;top:215.0px;font-size:26px;color:#d2d2d2;letter-spacing:0.552px;"># CLIne Master Prompt: Mind Map AI -</div>
<div class="t" style="left:1736.0px;top:253.0px;font-size:26px;color:#d2d2d2;letter-spacing:0.395px;">Local Knowledge Graph System</div>
<div class="t" style="left:1736.0px;top:327.0px;font-size:26px;color:#d2d2d2;letter-spacing:0.759px;">## Meta-Instructions for CLIne</div>
<div class="t" style="left:1733.0px;top:383.7px;font-size:23px;color:#d2d2d2;letter-spacing:0.346px;">44.6k</div>
<div class="abs" style="left:1804px;top:387px;width:345px;height:16px;border-radius:8px;background:#383838;overflow:hidden"><div style="width:16px;height:16px;background:#cdcdcd"></div></div>
<div class="t" style="left:2161.5px;top:383.7px;font-size:23px;color:#d2d2d2;letter-spacing:-0.909px;">1.0m</div>
<svg style="left:2225px;top:380.5px;" width="30" height="30" viewBox="0 0 30 30"><g class="ic" style="stroke-width:2;stroke-linecap:butt"><path d="M15 0v11M10.500 6.500l4.500 4.500 4.500-4.500M15 30v-11M10.500 23.500l4.500-4.500 4.500 4.500"/><path stroke-dasharray="3.200 2.600" d="M0 15h30"/></g></svg>
<div class="abs" style="left:1732px;top:431px;width:22px;height:22px;background:#6b7180;border-radius:3px"></div>
<div class="abs" style="left:1728px;top:495px;width:536px;height:681px;background:#616161;border-radius:0 0 7px 7px"></div>
<div class="t" style="left:1757.0px;top:505.0px;font-size:26px;color:#ffffff;font-weight:700;letter-spacing:0.406px;">Subsequent Phases</div>
<div class="t" style="left:2020.0px;top:505.0px;font-size:26px;color:#f7f7f7;letter-spacing:0.378px;">(After Phase 0</div>
<div class="t" style="left:1757.0px;top:537.5px;font-size:26px;color:#f7f7f7;letter-spacing:0.698px;">completion):</div>
<div class="abs" style="left:1798px;top:604.5px;width:8px;height:8px;border-radius:50%;background:#f7f7f7"></div>
<div class="t" style="left:1822.0px;top:595.5px;font-size:26px;color:#f7f7f7;letter-spacing:0.042px;">Phase 1: Backend Core</div>
<div class="t" style="left:1822.0px;top:628.0px;font-size:26px;color:#f7f7f7;letter-spacing:0.371px;">Infrastructure (FastAPI, SQLite)</div>
<div class="abs" style="left:1798px;top:669.5px;width:8px;height:8px;border-radius:50%;background:#f7f7f7"></div>
<div class="t" style="left:1822.0px;top:660.5px;font-size:26px;color:#f7f7f7;letter-spacing:0.365px;">Phase 2: NetworkX Graph Store</div>
<div class="t" style="left:1822.0px;top:693.0px;font-size:26px;color:#f7f7f7;letter-spacing:0.655px;">implementation</div>
<div class="abs" style="left:1798px;top:734.5px;width:8px;height:8px;border-radius:50%;background:#f7f7f7"></div>
<div class="t" style="left:1822.0px;top:725.5px;font-size:26px;color:#f7f7f7;letter-spacing:0.424px;">Phase 3: LLM Extraction Module</div>
<div class="abs" style="left:1798px;top:767.0px;width:8px;height:8px;border-radius:50%;background:#f7f7f7"></div>
<div class="t" style="left:1822.0px;top:758.0px;font-size:26px;color:#f7f7f7;letter-spacing:0.414px;">Phase 4: Embeddings &amp; Semantic</div>
<div class="t" style="left:1822.0px;top:790.5px;font-size:26px;color:#f7f7f7;letter-spacing:0.019px;">Search</div>
<div class="abs" style="left:1798px;top:832.0px;width:8px;height:8px;border-radius:50%;background:#f7f7f7"></div>
<div class="t" style="left:1822.0px;top:823.0px;font-size:26px;color:#f7f7f7;letter-spacing:0.350px;">Phase 5: Frontend Setup &amp; Graph</div>
<div class="t" style="left:1822.0px;top:855.5px;font-size:26px;color:#f7f7f7;letter-spacing:0.422px;">Visualization</div>
<div class="abs" style="left:1798px;top:897.0px;width:8px;height:8px;border-radius:50%;background:#f7f7f7"></div>
<div class="t" style="left:1822.0px;top:888.0px;font-size:26px;color:#f7f7f7;letter-spacing:0.411px;">Phase 6: Note Upload &amp;</div>
<div class="t" style="left:1822.0px;top:920.5px;font-size:26px;color:#f7f7f7;letter-spacing:0.684px;">Integration Testing</div>
<div class="abs" style="left:1798px;top:962.0px;width:8px;height:8px;border-radius:50%;background:#f7f7f7"></div>
<div class="t" style="left:1822.0px;top:953.0px;font-size:26px;color:#f7f7f7;letter-spacing:0.406px;">Phase 7: Security &amp; Deployment</div>
<div class="t" style="left:1757.0px;top:1012.0px;font-size:26px;color:#f7f7f7;letter-spacing:0.786px;">The project follows strict local-only</div>
<div class="t" style="left:1757.0px;top:1044.5px;font-size:26px;color:#f7f7f7;letter-spacing:0.583px;">constraints and requires</div>
<div class="t" style="left:1757.0px;top:1077.0px;font-size:26px;color:#f7f7f7;letter-spacing:0.611px;">comprehensive documentation at each</div>
<div class="t" style="left:1757.0px;top:1109.5px;font-size:26px;color:#f7f7f7;letter-spacing:0.156px;">phase.</div>
<div class="abs" style="left:2276px;top:1067px;width:20px;height:137px;background:#3e3e3e;"></div>
<div class="abs" style="left:1728px;top:1205px;width:538px;height:24px;border:2px solid #252525;border-bottom:none;border-radius:22px 22px 0 0;-webkit-mask-image:linear-gradient(#000 30%,transparent)"></div>
<div class="t" style="left:1748.5px;top:1226.0px;font-size:26px;color:#d8d8d8;letter-spacing:0.705px;">Auto-approve:</div>
<svg style="left:1952px;top:1228px;" width="19" height="21" viewBox="0 0 19 21"><path class="ic" style="stroke:#8f8f8f;stroke-width:2.200;stroke-linecap:butt" d="M1 11.500l6 7L18 1"/></svg>
<div class="abs" style="left:1980px;top:1220px;width:214.500px;height:40px;overflow:hidden"><div class="t" style="left:0;top:6.0px;font-size:26px;color:#8f8f8f;letter-spacing:0.3px">Read, Edit, Safe C</div></div>
<svg style="left:2216px;top:1232px;" width="21" height="11" viewBox="0 0 21 11"><path class="ic" style="stroke-width:2;stroke-linecap:butt" d="M1 10.500l9.500-9.500 9.500 9.500"/></svg>
<div class="abs" style="left:1728px;top:1270px;width:538px;height:52px;border-radius:4px;background:#3577cf"></div>
<div class="t" style="left:1822.5px;top:1284.0px;font-size:26px;color:#ffffff;letter-spacing:0.883px;-webkit-text-stroke:0.6px #ffffff;">Start New Task with Context</div>
<div class="abs" style="left:1724px;top:1340px;width:546px;height:130px;border:2px solid #2f7ad5;border-radius:6px;background:#313131"></div>
<div class="abs" style="left:1744px;top:1361px;width:2px;height:28px;background:#e0e0e0;"></div>
<div class="t" style="left:1747.0px;top:1362.7px;font-size:24px;color:#7c7c7c;letter-spacing:0.229px;">Type a message...</div>
<div class="t" style="left:1739.0px;top:1425.2px;font-size:21px;color:#676767;letter-spacing:0.201px;">Type @ for context, / for slash commands ...</div>
<svg style="left:2225px;top:1423px;" width="29" height="26" viewBox="0 0 29 26"><path class="ic" style="stroke:#8a8a8a;stroke-width:2;stroke-linejoin:round;stroke-linecap:butt" d="M1.500 1.500L27.500 13 1.500 24.500l3.500-11.500zM5 13h12"/></svg>
<div class="t" style="left:1728.5px;top:1488.2px;font-size:24px;color:#cccccc;letter-spacing:-1.363px;">@</div>
<svg style="left:1776px;top:1492.5px;" width="18" height="18" viewBox="0 0 18 18"><path class="ic" style="stroke-width:2;stroke-linecap:butt" d="M9 0v18M0 9h18"/></svg>
<svg style="left:1820.5px;top:1492.5px;" width="19" height="22" viewBox="0 0 19 22"><g class="ic" style="stroke-width:1.800;stroke-linecap:butt"><rect x="1" y="1" width="17" height="5" rx="1"/><rect x="1" y="8.500" width="17" height="5" rx="1"/><rect x="1" y="16" width="17" height="5" rx="1"/><path stroke-dasharray="1.200 1.600" stroke-width="2.500" d="M3.500 2.800h12M3.500 10.300h12M3.500 17.800h12"/></g></svg>
<svg style="left:1866px;top:1491px;" width="21" height="22" viewBox="0 0 21 22"><g class="ic" style="stroke-width:1.800;stroke-linecap:butt"><path d="M10.500 1v19M5 21h11M2 4.500h17M4.500 5L1 13.500h7zM16.500 5L13 13.500h7z"/></g></svg>
<div class="t" style="left:1902.5px;top:1490.4px;font-size:22px;color:#bdbdbd;letter-spacing:0.024px;">cline:cline/code-super...</div>
<div class="abs" style="left:2141.500px;top:1482.800px;width:129.500px;height:35.500px;border:2px solid #3c3c3c;border-radius:18px;background:#1c1c1c;overflow:hidden"><div style="position:absolute;left:63.500px;top:0;width:64px;height:32px;background:#2f7ad5"></div></div>
<div class="t" style="left:2157.0px;top:1490.4px;font-size:21px;color:#d8d8d8;letter-spacing:-0.383px;">Plan</div>
<div class="t" style="left:2225.0px;top:1490.4px;font-size:21px;color:#ffffff;letter-spacing:0.385px;">Act</div>
<svg style="left:2318px;top:74px;" width="52" height="52" viewBox="0 0 52 52"><circle fill="none" stroke="#868686" stroke-width="3.4" stroke-linejoin="round" cx="20" cy="20" r="14.500"/><path fill="none" stroke="#868686" stroke-width="3.4" stroke-linejoin="round" d="M30.500 30.500L47 47"/></svg>
<svg style="left:2322px;top:168px;" width="48" height="56" viewBox="0 0 48 56"><circle fill="none" stroke="#868686" stroke-width="3.2" stroke-linejoin="round" cx="11.500" cy="11" r="6"/><circle fill="none" stroke="#868686" stroke-width="3.2" stroke-linejoin="round" cx="11.500" cy="44.500" r="6"/><circle fill="none" stroke="#868686" stroke-width="3.2" stroke-linejoin="round" cx="32.500" cy="20.500" r="6"/><path fill="none" stroke="#868686" stroke-width="3.2" stroke-linejoin="round" d="M11.500 17v21.500M32.500 26.500q0 6-6 6h-8.500q-5 0-6 5"/></svg>
<svg style="left:2318px;top:266px;" width="52" height="52" viewBox="0 0 52 52"><path fill="none" stroke="#868686" stroke-width="3.2" stroke-linejoin="round" d="M18.800 23.600V2.400L49.800 22.500 29.100 35.700"/><ellipse fill="none" stroke="#868686" stroke-width="3.2" stroke-linejoin="round" cx="13.900" cy="38" rx="7.200" ry="10.400"/><path fill="none" stroke="#868686" stroke-width="2.8" stroke-linejoin="round" d="M7 34h14M2.100 39.500h3.800M22 39.500h3.800M2.700 30l4.200 3.600M25.100 30l-4.200 3.600M2.700 48.900l4.200-3.600M25.100 48.900l-4.200-3.600"/></svg>
<svg style="left:2319px;top:366px;" width="52" height="50" viewBox="0 0 52 50"><path fill="none" stroke="#868686" stroke-width="3.2" stroke-linejoin="round" d="M21.200 35.200H3.600V3.700H44.300V20.100"/><path fill="none" stroke="#868686" stroke-width="3" stroke-linejoin="round" d="M11.400 41.400H23.500"/><circle fill="none" stroke="#868686" stroke-width="3" stroke-linejoin="round" cx="36.500" cy="33.300" r="11"/><path fill="none" stroke="#868686" stroke-width="2.2" stroke-linejoin="round" d="M31.200 32.200l3.800 3.200-3.800 3.600M43 29l-4 3.200 4 3.500"/></svg>
<svg style="left:2322px;top:460px;" width="48" height="48" viewBox="0 0 48 48"><path fill="none" stroke="#868686" stroke-width="3.2" stroke-linejoin="round" d="M4.500 7.500h18v18h-18zM4.500 25.500h18v18h-18zM22.500 25.500h18v18h-18z"/><path fill="none" stroke="#868686" stroke-width="3.2" stroke-linejoin="round" d="M33.500 3.500l10.500 10.500-10.500 10.500-10.500-10.500z"/></svg>
<svg style="left:2324px;top:560px;" width="40" height="40" viewBox="0 0 40 40"><path fill="#868686" d="M20 0Q25.500 14.500 40 20 25.500 25.500 20 40 14.500 25.500 0 20 14.500 14.500 20 0z"/></svg>
<svg style="left:2320px;top:652px;" width="48" height="48" viewBox="0 0 48 48"><circle fill="none" stroke="#868686" stroke-width="2.4" stroke-linejoin="round" cx="24" cy="24" r="22.500"/><circle fill="#868686" cx="20.500" cy="12.500" r="4.600"/><circle fill="#868686" cx="32.500" cy="24.500" r="4.600"/><circle fill="#868686" cx="20.500" cy="36" r="4.600"/><path fill="none" stroke="#868686" stroke-width="2.6" stroke-linejoin="round" d="M20.500 12.500v23.500M20.500 12.500l12 12"/></svg>
<svg style="left:2320px;top:748px;" width="48" height="48" viewBox="0 0 24 24"><path fill="#868686" d="M22.2819 9.8211a5.9847 5.9847 0 0 0-.5157-4.9108 6.0462 6.0462 0 0 0-6.5098-2.9A6.0651 6.0651 0 0 0 4.9807 4.1818a5.9847 5.9847 0 0 0-3.9977 2.9 6.0462 6.0462 0 0 0 .7427 7.0966 5.98 5.98 0 0 0 .511 4.9107 6.051 6.051 0 0 0 6.5146 2.9001A5.9847 5.9847 0 0 0 13.2599 24a6.0557 6.0557 0 0 0 5.7718-4.2058 5.9894 5.9894 0 0 0 3.9977-2.9001 6.0557 6.0557 0 0 0-.7475-7.0729zm-9.022 12.6081a4.4755 4.4755 0 0 1-2.8764-1.0408l.1419-.0804 4.7783-2.7582a.7948.7948 0 0 0 .3927-.6813v-6.7369l2.02 1.1686a.071.071 0 0 1 .038.052v5.5826a4.504 4.504 0 0 1-4.4945 4.4944zm-9.6607-4.1254a4.4708 4.4708 0 0 1-.5346-3.0137l.142.0852 4.783 2.7582a.7712.7712 0 0 0 .7806 0l5.8428-3.3685v2.3324a.0804.0804 0 0 1-.0332.0615L9.74 19.9502a4.4992 4.4992 0 0 1-6.1408-1.6464zM2.3408 7.8956a4.485 4.485 0 0 1 2.3655-1.9728V11.6a.7664.7664 0 0 0 .3879.6765l5.8144 3.3543-2.0201 1.1685a.0757.0757 0 0 1-.071 0l-4.8303-2.7865A4.504 4.504 0 0 1 2.3408 7.872zm16.5963 3.8558L13.1038 8.364 15.1192 7.2a.0757.0757 0 0 1 .071 0l4.8303 2.7913a4.4944 4.4944 0 0 1-.6765 8.1042v-5.6772a.79.79 0 0 0-.407-.667zm2.0107-3.0231l-.142-.0852-4.7735-2.7818a.7759.7759 0 0 0-.7854 0L9.409 9.2297V6.8974a.0662.0662 0 0 1 .0284-.0615l4.8303-2.7866a4.4992 4.4992 0 0 1 6.6802 4.66zM8.3065 12.863l-2.02-1.1638a.0804.0804 0 0 1-.038-.0567V6.0742a4.4992 4.4992 0 0 1 7.3757-3.4537l-.142.0805L8.704 5.459a.7948.7948 0 0 0-.3927.6813zm1.0976-2.3654l2.602-1.4998 2.6069 1.4998v2.9994l-2.5974 1.4997-2.6067-1.4997Z"/></svg>
<svg style="left:2318px;top:842px;" width="52" height="52" viewBox="0 0 52 52"><circle fill="#d7d7d7" cx="25.500" cy="6.500" r="5.500"/><rect fill="none" stroke="#d7d7d7" stroke-width="3.4" stroke-linejoin="round" x="7" y="12.500" width="38" height="37" rx="12"/><path fill="none" stroke="#d7d7d7" stroke-width="3" stroke-linejoin="round" d="M7 24l-3.500 6.500 3.500 6.500M45 24l3.500 6.500-3.500 6.500"/><rect fill="#d7d7d7" x="16.500" y="22" width="6.800" height="16" rx="3.400"/><rect fill="#d7d7d7" x="28.500" y="22" width="6.800" height="16" rx="3.400"/></svg>
<svg style="left:2320px;top:940px;" width="48" height="48" viewBox="0 0 48 48"><rect fill="none" stroke="#868686" stroke-width="3.2" stroke-linejoin="round" x="3.500" y="3.500" width="18" height="18" rx="3"/><rect fill="none" stroke="#868686" stroke-width="3.2" stroke-linejoin="round" x="26.500" y="26.500" width="18" height="18" rx="3"/><path fill="none" stroke="#868686" stroke-width="3.2" stroke-linejoin="round" d="M12.500 21.500v9q0 4.500 4.500 4.500h9.500"/></svg>
<svg style="left:2320px;top:1038px;" width="48" height="44" viewBox="0 0 48 44"><circle fill="none" stroke="#868686" stroke-width="5" stroke-linejoin="round" cx="14" cy="15" r="10.500"/><circle fill="none" stroke="#868686" stroke-width="5" stroke-linejoin="round" cx="34" cy="15" r="10.500"/><g fill="#868686"><circle cx="10.500" cy="15" r="1.700"/><circle cx="17.500" cy="15" r="1.700"/><circle cx="30.500" cy="15" r="1.700"/><circle cx="37.500" cy="15" r="1.700"/></g><path fill="none" stroke="#868686" stroke-width="3.4" stroke-linejoin="round" d="M5 27q-3 2-3 6 0 7 7 7h30q7 0 7-7 0-4-3-6M24 24v16"/></svg>
<div class="abs" style="left:2325.8px;top:1153px;width:6.400px;height:6.400px;border-radius:50%;background:#868686"></div>
<div class="abs" style="left:2340.8px;top:1153px;width:6.400px;height:6.400px;border-radius:50%;background:#868686"></div>
<div class="abs" style="left:2355.8px;top:1153px;width:6.400px;height:6.400px;border-radius:50%;background:#868686"></div>
<svg style="left:2320px;top:1370px;" width="48" height="48" viewBox="0 0 48 48"><circle fill="none" stroke="#868686" stroke-width="3.4" stroke-linejoin="round" cx="24" cy="24" r="22"/><circle fill="none" stroke="#868686" stroke-width="3.4" stroke-linejoin="round" cx="24" cy="19" r="9"/><path fill="none" stroke="#868686" stroke-width="3.4" stroke-linejoin="round" d="M9.500 40q3-11.500 14.500-11.500t14.500 11.500"/></svg>
<svg style="left:2320px;top:1466px;" width="48" height="48" viewBox="0 0 48 48"><path fill="none" stroke="#868686" stroke-width="3.2" stroke-linejoin="round" d="M20.75 10.40L20.72 3.77L27.28 3.77L27.25 10.40L30.96 11.93L35.63 7.23L40.27 11.87L35.57 16.54L37.10 20.25L43.73 20.22L43.73 26.78L37.10 26.75L35.57 30.46L40.27 35.13L35.63 39.77L30.96 35.07L27.25 36.60L27.28 43.23L20.72 43.23L20.75 36.60L17.04 35.07L12.37 39.77L7.73 35.13L12.43 30.46L10.90 26.75L4.27 26.78L4.27 20.22L10.90 20.25L12.43 16.54L7.73 11.87L12.37 7.23L17.04 11.93Z"/><circle fill="none" stroke="#868686" stroke-width="3.2" stroke-linejoin="round" cx="24" cy="23.500" r="5"/></svg>
<div class="abs" style="left:0;top:1540px;width:2388px;height:32px;overflow:hidden">
<div class="abs" style="left:0px;top:0px;width:60px;height:32px;background:#3277d3;"></div>
<svg style="left:16px;top:7px;" width="20" height="30" viewBox="0 0 20 30"><path fill="none" stroke="#ffffff" stroke-width="2.2" stroke-linejoin="round" d="M1.500 9.500l8.500 8-8.500 8M18 1.500l-7.500 8 7.500 7.500"/></svg>
<svg style="left:77px;top:7px;" width="26" height="26" viewBox="0 0 26 26"><path fill="none" stroke="#cccccc" stroke-width="2" stroke-linejoin="round" d="M24.500 1.500q-11 0-16.500 9.500l-2 4 5 5 4-2q9.500-5.500 9.500-16.500zM8 11H2.500v5.500M15 18v5.500H9.500M1.500 20.500v4h4"/><circle fill="#cccccc" cx="16.500" cy="9.500" r="2.300"/></svg>
<svg style="left:105px;top:7px;" width="26" height="26" viewBox="0 0 26 26"><path fill="none" stroke="#cccccc" stroke-width="2" stroke-linejoin="round" d="M1 25l4-4M24.500 1.500l-4 4M9.500 10.500l6 6-3 3q-3.500 3-7 0t0-6zM13.500 8l3-3q3.500-3 6.500 0t0 6.500l-3 3z"/></svg>
<div class="t" style="left:140.0px;top:8.7px;font-size:24px;color:#cccccc;letter-spacing:0.413px;">Launchpad</div>
<svg style="left:297.5px;top:8px;" width="24" height="24" viewBox="0 0 24 24"><circle fill="none" stroke="#cccccc" stroke-width="2" stroke-linejoin="round" cx="12" cy="12" r="11"/><path fill="none" stroke="#cccccc" stroke-width="2" stroke-linejoin="round" d="M7.500 7.500l9 9M16.500 7.500l-9 9"/></svg>
<div class="t" style="left:331.5px;top:8.7px;font-size:24px;color:#cccccc;letter-spacing:-0.848px;">0</div>
<svg style="left:354px;top:8px;" width="25" height="23" viewBox="0 0 25 23"><path fill="none" stroke="#cccccc" stroke-width="2" stroke-linejoin="round" d="M12.500 1.500l11 20.500h-22z"/><path fill="none" stroke="#cccccc" stroke-width="2.2" stroke-linejoin="round" d="M12.500 8.500v7M12.500 17.500v2.500"/></svg>
<div class="t" style="left:388.0px;top:8.7px;font-size:24px;color:#cccccc;letter-spacing:-0.848px;">0</div>
<div class="t" style="left:746.0px;top:8.7px;font-size:24px;color:#cccccc;letter-spacing:1.007px;">Ln 4593, Col 31 (134395 selected)</div>
<div class="t" style="left:1181.0px;top:8.7px;font-size:24px;color:#cccccc;letter-spacing:0.474px;">Spaces: 4</div>
<div class="t" style="left:1326.0px;top:8.7px;font-size:24px;color:#cccccc;letter-spacing:0.502px;">UTF-8</div>
<div class="t" style="left:1431.0px;top:8.7px;font-size:24px;color:#cccccc;letter-spacing:-1.504px;">LF</div>
<div class="t" style="left:1492.0px;top:8.7px;font-size:24px;color:#cccccc;letter-spacing:3.734px;">{}</div>
<div class="t" style="left:1530.0px;top:8.7px;font-size:24px;color:#cccccc;letter-spacing:0.599px;">Markdown</div>
<svg style="left:1678px;top:6px;" width="30" height="28" viewBox="0 0 30 28"><path fill="none" stroke="#cccccc" stroke-width="3" stroke-linejoin="round" d="M8.500 4.500q5.500-1.500 6 3.500v3q-1 3.500-6 3-4.500 0-4.500-4 0-4.500 4.500-5.500zM21 4.500q-5.500-1.500-6 3.500v3q1 3.500 6 3 4.500 0 4.500-4 0-4.500-4.500-5.500zM4 12q-2.500 2-2.500 7 4 6.500 13.500 6.500T28.500 19q0-5-2.500-7"/><path fill="none" stroke="#cccccc" stroke-width="2.4" stroke-linejoin="round" d="M3 1l24 26"/></svg>
<svg style="left:1741px;top:7px;" width="24" height="30" viewBox="0 0 24 30"><path fill="none" stroke="#cccccc" stroke-width="2" stroke-linejoin="round" d="M6 20.600A10.500 10.500 0 1 1 18 20.600M8.500 15.600A5 5 0 1 1 15.500 15.600"/><circle fill="#cccccc" cx="12" cy="12" r="2.200"/><path fill="none" stroke="#cccccc" stroke-width="3.5" stroke-linejoin="round" d="M12 14v16"/></svg>
<div class="t" style="left:1773.5px;top:8.7px;font-size:24px;color:#cccccc;letter-spacing:0.041px;">Go Live</div>
<div class="abs" style="left:1874px;top:0px;width:68px;height:32px;background:#77651f;"></div>
<svg style="left:1892px;top:7px;" width="30" height="30" viewBox="0 0 30 30"><path fill="#ffffff" d="M15 1Q15.800 11.200 26.500 13 15.800 14.800 15 25 14.200 14.800 3.500 13 14.200 11.200 15 1z"/><path fill="none" stroke="#77651f" stroke-width="5.500" d="M3 3l22 23"/><path fill="none" stroke="#ffffff" stroke-width="2.4" stroke-linejoin="round" d="M2 2l24 25"/></svg>
<svg style="left:1959px;top:11px;" width="25" height="21" viewBox="0 0 25 21"><path fill="none" stroke="#cccccc" stroke-width="2" stroke-linejoin="round" d="M7 2.500l-6 8 6 8M18 2.500l6 8-6 8M15 0.500L10 20.500"/></svg>
<svg style="left:2020px;top:11px;" width="23" height="19" viewBox="0 0 23 19"><path fill="none" stroke="#cccccc" stroke-width="2" stroke-linejoin="round" d="M1 11l6.500 7L22 1"/></svg>
<div class="t" style="left:2053.5px;top:8.7px;font-size:24px;color:#cccccc;letter-spacing:0.303px;">Continue (NE)</div>
<svg style="left:2243px;top:11px;" width="27" height="19" viewBox="0 0 27 19"><path fill="none" stroke="#cccccc" stroke-width="1.8" stroke-linejoin="round" d="M1 12l5 6L19 2M10 15.500l2.500 2.500L26 1"/></svg>
<div class="t" style="left:2279.5px;top:8.7px;font-size:24px;color:#cccccc;letter-spacing:0.518px;">Prettier</div>
</div>
<div class="abs" style="left:1667px;top:1190px;width:1px;height:348px;background:#111111;"></div>
</div></body>
</html>
